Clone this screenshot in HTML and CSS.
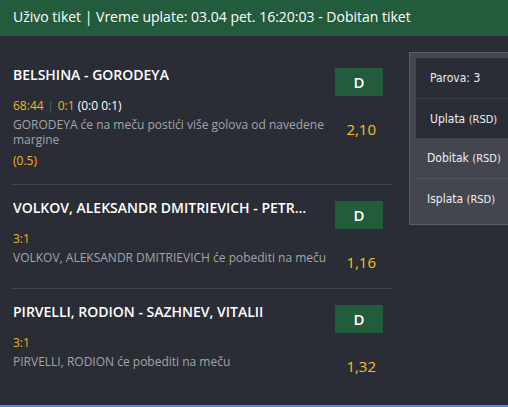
FILE: index.html
```html
<!DOCTYPE html>
<html lang="sr">
<head>
    <meta charset="UTF-8">
    <meta name="viewport" content="width=device-width, initial-scale=1.0">
    <title>Uživo tiket</title>
    <link rel="stylesheet" href="styles.css">
</head>
<body>
    <header class="ticket-header">Uživo tiket | Vreme uplate: 03.04 pet. 16:20:03 - Dobitan tiket</header>

    <div class="ticket-main">
        <!-- Lista parova -->
        <div class="pair-list">
            <div class="pair">
                <div class="pair-head">
                    <div class="pair-title">BELSHINA - GORODEYA</div>
                    <div class="pair-badge">D</div>
                </div>
                <div class="pair-meta"><span class="live">68:44</span><span class="sep">|</span><span class="live">0:1</span> <span class="score">(0:0 0:1)</span></div>
                <div class="pair-body">
                    <div class="pair-desc">GORODEYA će na meču postići više golova od navedene margine
                        <div class="pair-margin">(0.5)</div>
                    </div>
                    <div class="pair-odds">2,10</div>
                </div>
            </div>
            <div class="pair">
                <div class="pair-head">
                    <div class="pair-title">VOLKOV, ALEKSANDR DMITRIEVICH - PETROV, NIKOLAI</div>
                    <div class="pair-badge">D</div>
                </div>
                <div class="pair-meta"><span class="live">3:1</span></div>
                <div class="pair-body">
                    <div class="pair-desc">VOLKOV, ALEKSANDR DMITRIEVICH će pobediti na meču</div>
                    <div class="pair-odds">1,16</div>
                </div>
            </div>
            <div class="pair">
                <div class="pair-head">
                    <div class="pair-title">PIRVELLI, RODION - SAZHNEV, VITALII</div>
                    <div class="pair-badge">D</div>
                </div>
                <div class="pair-meta"><span class="live">3:1</span></div>
                <div class="pair-body">
                    <div class="pair-desc">PIRVELLI, RODION će pobediti na meču</div>
                    <div class="pair-odds">1,32</div>
                </div>
            </div>
        </div>

        <!-- Sažetak tiketa -->
        <div class="summary">
            <div class="summary-top">
                <div class="summary-row first">Parova: 3</div>
                <div class="summary-row">Uplata <small>(RSD)</small></div>
            </div>
            <div class="summary-row light">Dobitak <small>(RSD)</small></div>
            <div class="summary-row light">Isplata <small>(RSD)</small></div>
        </div>
    </div>
</body>
</html>
```

FILE: styles.css
```css
body { margin: 0; height: 407px; overflow: hidden; background: #2a2d35; color: #fff; font-family: "Open Sans", Arial, sans-serif; border-bottom: 2px solid #2e9be6; box-sizing: border-box; }
.ticket-header { background: #235c3c; height: 36px; line-height: 34px; padding-left: 13px; font-size: 14px; }
.ticket-main { display: flex; gap: 16px; padding: 16px 0 0 12px; }
.pair-list { width: 381px; flex-shrink: 0; }
.pair { padding: 16px 10px 16px 1px; border-bottom: 1px solid #43464d; }
.pair:last-child { border-bottom: none; }
.pair-head { display: flex; justify-content: space-between; align-items: flex-start; gap: 20px; }
.pair-title { font-size: 14px; font-weight: 600; line-height: 18px; margin-top: -2px; white-space: nowrap; overflow: hidden; text-overflow: ellipsis; }
.pair-badge { flex-shrink: 0; width: 48px; height: 28px; background: #235c3c; text-align: center; line-height: 28px; font-size: 15px; font-weight: 600; }
.pair-meta { font-size: 12px; line-height: 15px; margin-top: 2px; }
.live { color: #f0b41e; }
.sep { color: #60636a; margin: 0 4px; font-size: 11px; }
.score { color: #fff; font-weight: 500; }
.pair-body { display: flex; justify-content: space-between; align-items: flex-start; margin-top: 4px; padding-right: 7px; }
.pair-desc { width: 320px; font-size: 12px; line-height: 15px; color: #a2a5aa; }
.pair-margin { color: #f0b41e; margin-top: 6px; }
.pair-odds { font-size: 15px; color: #f5c21a; margin-top: 2px; }
.summary { flex-shrink: 0; width: 130px; height: 166px; border: 1px solid #5b5e64; background: #43464e; padding: 5px 0 0 6px; font-family: "Liberation Sans Narrow", "DejaVu Sans Condensed", sans-serif; font-size: 12px; color: #eee; }
.summary small { font-size: 11px; }
.summary-top { background: #2a2d35; }
.summary-row { height: 40px; line-height: 40px; padding-left: 11px; }
.summary-top .summary-row { padding-left: 14px; }
.summary-top .summary-row + .summary-row { border-top: 1px solid #3a3d44; height: 39px; }
.summary-row.light + .summary-row.light { border-top: 1px solid #52555c; height: 39px; }
```
